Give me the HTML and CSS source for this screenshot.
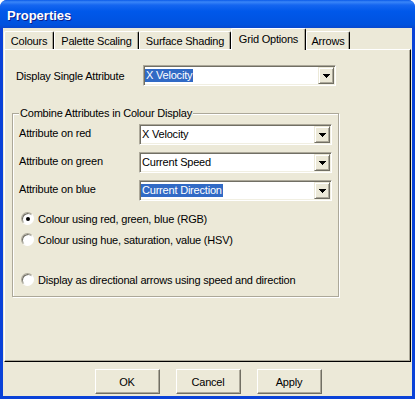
FILE: index.html
```html
<!DOCTYPE html>
<html>
<head>
<meta charset="utf-8">
<link rel="stylesheet" href="styles.css">
</head>
<body>
<div class="window">
  <div class="titlebar"><span class="title">Properties</span></div>
  <div class="client">
    <div class="tabs">
      <div class="tab t-colours">Colours</div>
      <div class="tab t-palette">Palette Scaling</div>
      <div class="tab t-surface">Surface Shading</div>
      <div class="tab t-grid active">Grid Options</div>
      <div class="tab t-arrows">Arrows</div>
    </div>
    <div class="panel">
      <div class="row single">
        <span class="label label-wide">Display Single Attribute</span>
        <div class="combo">
          <div class="ctext"><span class="sel">X Velocity</span></div>
          <div class="drop"><svg width="7" height="4" viewBox="0 0 7 4" shape-rendering="crispEdges"><path d="M0 0h7v1h-1v1h-1v1h-1v1h-1v-1h-1v-1h-1v-1h-1z" fill="#000"/></svg></div>
        </div>
      </div>
      <fieldset class="group">
        <legend>Combine Attributes in Colour Display</legend>
        <div class="row attr">
          <span class="label">Attribute on red</span>
          <div class="combo">
            <div class="ctext"><span class="plain">X Velocity</span></div>
            <div class="drop"><svg width="7" height="4" viewBox="0 0 7 4" shape-rendering="crispEdges"><path d="M0 0h7v1h-1v1h-1v1h-1v1h-1v-1h-1v-1h-1v-1h-1z" fill="#000"/></svg></div>
          </div>
        </div>
        <div class="row attr">
          <span class="label">Attribute on green</span>
          <div class="combo">
            <div class="ctext"><span class="plain">Current Speed</span></div>
            <div class="drop"><svg width="7" height="4" viewBox="0 0 7 4" shape-rendering="crispEdges"><path d="M0 0h7v1h-1v1h-1v1h-1v1h-1v-1h-1v-1h-1v-1h-1z" fill="#000"/></svg></div>
          </div>
        </div>
        <div class="row attr">
          <span class="label">Attribute on blue</span>
          <div class="combo">
            <div class="ctext"><span class="sel">Current Direction</span></div>
            <div class="drop"><svg width="7" height="4" viewBox="0 0 7 4" shape-rendering="crispEdges"><path d="M0 0h7v1h-1v1h-1v1h-1v1h-1v-1h-1v-1h-1v-1h-1z" fill="#000"/></svg></div>
          </div>
        </div>
        <div class="radio-row first"><span class="radio checked"><span class="dot"></span></span>Colour using red, green, blue (RGB)</div>
        <div class="radio-row"><span class="radio"></span>Colour using hue, saturation, value (HSV)</div>
        <div class="radio-row last"><span class="radio"></span>Display as directional arrows using speed and direction</div>
      </fieldset>
    </div>
    <div class="buttons">
      <div class="btn">OK</div>
      <div class="btn">Cancel</div>
      <div class="btn">Apply</div>
    </div>
  </div>
</div>
</body>
</html>
```
FILE: styles.css
```css
html, body {
  margin: 0;
  padding: 0;
  background: #ffffff;
}
body {
  font-family: "Liberation Sans", Arial, sans-serif;
  font-size: 11px;
  letter-spacing: -0.2px;
  color: #000;
}
.window {
  width: 415px;
  height: 399px;
  display: flex;
  flex-direction: column;
  background: #0A42D8;
  border-radius: 7px 7px 0 0;
  overflow: hidden;
}
.titlebar {
  height: 28px;
  flex: none;
  box-sizing: border-box;
  padding: 3px 0 0 7px;
  display: flex;
  align-items: center;
  background: linear-gradient(180deg, #0A5AE8 0%, #3A86F8 7%, #1566F0 18%, #0058EA 40%, #0054E3 70%, #0052DE 88%, #0848CF 100%);
}
.title {
  font-weight: bold;
  font-size: 13px;
  letter-spacing: 0;
  color: #fff;
  text-shadow: 1px 1px 0 #0A1E8C;
}
.client {
  flex: 1;
  margin: 0 3px 3px;
  background: #ECE9D8;
  display: flex;
  flex-direction: column;
}
.tabs {
  height: 21px;
  flex: none;
  display: flex;
  align-items: flex-end;
  padding-left: 1px;
}
.tab {
  height: 18px;
  box-sizing: border-box;
  padding-top: 3px;
  line-height: 13px;
  text-align: center;
  border-top: 1px solid #fff;
  border-left: 1px solid #fff;
  border-right: 1px solid #000;
  box-shadow: inset -1px 0 0 #ACA899;
  border-radius: 2px 2px 0 0;
  white-space: nowrap;
}
.t-colours { width: 50px; }
.t-palette { width: 85px; }
.t-surface { width: 92px; }
.t-grid { width: 75px; }
.t-arrows { width: 44px; }
.tab.active {
  height: 22px;
  margin-bottom: -1px;
  padding-top: 4px;
  background: #ECE9D8;
  position: relative;
  z-index: 1;
}
.panel {
  height: 313px;
  flex: none;
  margin: 0 1px;
  box-sizing: border-box;
  border-top: 1px solid #fff;
  border-left: 1px solid #fff;
  border-right: 1px solid #000;
  border-bottom: 1px solid #000;
  box-shadow: inset -1px -1px 0 #ACA899;
  padding: 15px 0 0 7px;
}
.row {
  display: flex;
  align-items: center;
}
.single {
  padding-left: 4px;
}
.label {
  width: 120px;
  flex: none;
  line-height: 13px;
  margin-top: -2px;
  white-space: nowrap;
}
.label-wide {
  width: 127px;
  margin-top: 1px;
}
.combo {
  width: 193px;
  height: 21px;
  box-sizing: border-box;
  border: 1px solid;
  border-color: #ACA899 #fff #fff #ACA899;
  box-shadow: inset 1px 1px 0 #716F64, inset -1px -1px 0 #F1EFE2;
  padding: 1px;
  display: flex;
  background: #fff;
}
.ctext {
  flex: 1;
  display: flex;
  align-items: center;
  background: #fff;
  white-space: nowrap;
}
.sel {
  background: #316AC5;
  color: #fff;
  line-height: 13px;
  padding: 0 1px;
}
.plain {
  line-height: 13px;
  padding: 0 1px;
}
.drop {
  width: 16px;
  height: 17px;
  box-sizing: border-box;
  border: 1px solid;
  border-color: #ECE9D8 #716F64 #716F64 #ECE9D8;
  box-shadow: inset 1px 1px 0 #fff, inset -1px -1px 0 #ACA899;
  background: #ECE9D8;
  display: flex;
  align-items: center;
  justify-content: center;
}
.drop svg {
  display: block;
}
.group {
  width: 327px;
  box-sizing: border-box;
  margin: 21px 0 0 0;
  padding: 4px 6px 6px;
  border: 1px solid #ACA899;
  box-shadow: inset 1px 1px 0 #fff, 1px 1px 0 #fff;
  min-width: 0;
}
.group legend {
  padding: 0 1px;
  line-height: 13px;
  background: #ECE9D8;
  white-space: nowrap;
}
.attr + .attr {
  margin-top: 7px;
}
.radio-row {
  height: 21px;
  display: flex;
  align-items: center;
  padding-left: 2px;
  white-space: nowrap;
}
.radio-row.first {
  margin-top: 7px;
}
.radio-row.last {
  margin-top: 19px;
}
.radio {
  width: 13px;
  height: 13px;
  box-sizing: border-box;
  border-radius: 50%;
  border: 1px solid;
  border-color: #ACA899 #fff #fff #ACA899;
  box-shadow: inset 1px 1px 0 #716F64;
  background: #fff;
  margin-right: 4px;
  display: flex;
  align-items: center;
  justify-content: center;
  flex: none;
}
.dot {
  width: 4px;
  height: 4px;
  border-radius: 50%;
  background: #000;
}
.buttons {
  flex: 1;
  display: flex;
  justify-content: center;
  gap: 16px;
  padding-top: 7px;
  padding-left: 1px;
}
.btn {
  width: 65px;
  height: 25px;
  box-sizing: border-box;
  border: 1px solid;
  border-color: #fff #716F64 #716F64 #fff;
  box-shadow: inset -1px -1px 0 #ACA899;
  display: flex;
  align-items: center;
  justify-content: center;
}
```
